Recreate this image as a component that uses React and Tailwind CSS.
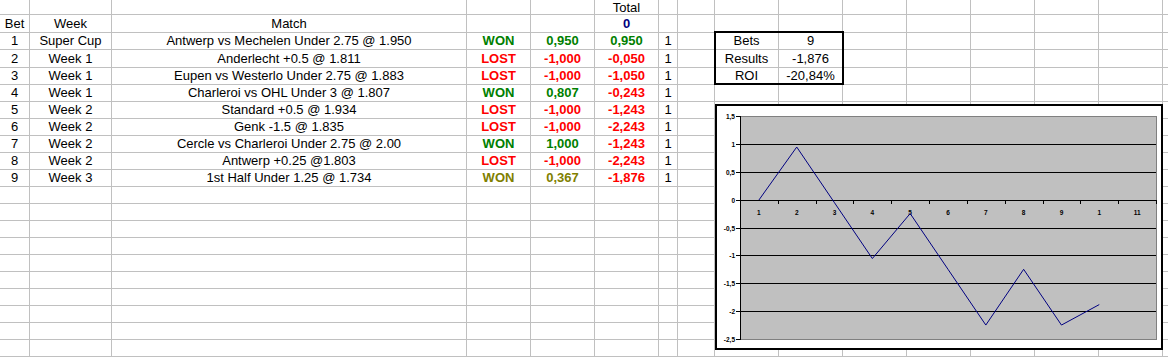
import React from "react";

const W = [
  "w-[30px]", "w-[82px]", "w-[355px]", "w-[64px]", "w-[64px]", "w-[64px]", "w-[19px]", "w-[37px]",
  "w-[64px]", "w-[64px]", "w-[64px]", "w-[64px]", "w-[64px]", "w-[64px]", "w-[64px]", "w-[64px]",
];

const G = "text-[#008000] font-bold";
const R = "text-[#ff0000] font-bold";
const O = "text-[#808000] font-bold";

const bets = [
  ["1", "Super Cup", "Antwerp vs Mechelen Under 2.75 @ 1.950", ["WON", G], ["0,950", G], ["0,950", G], ["Bets", ""], ["9", ""]],
  ["2", "Week 1", "Anderlecht +0.5 @ 1.811", ["LOST", R], ["-1,000", R], ["-0,050", R], ["Results", ""], ["-1,876", ""]],
  ["3", "Week 1", "Eupen vs Westerlo Under 2.75 @ 1.883", ["LOST", R], ["-1,000", R], ["-1,050", R], ["ROI", ""], ["-20,84%", ""]],
  ["4", "Week 1", "Charleroi vs OHL Under 3 @ 1.807", ["WON", G], ["0,807", G], ["-0,243", R]],
  ["5", "Week 2", "Standard +0.5 @ 1.934", ["LOST", R], ["-1,000", R], ["-1,243", R]],
  ["6", "Week 2", "Genk -1.5 @ 1.835", ["LOST", R], ["-1,000", R], ["-2,243", R]],
  ["7", "Week 2", "Cercle vs Charleroi Under 2.75 @ 2.00", ["WON", G], ["1,000", G], ["-1,243", R]],
  ["8", "Week 2", "Antwerp +0.25 @1.803", ["LOST", R], ["-1,000", R], ["-2,243", R]],
  ["9", "Week 3", "1st Half Under 1.25 @ 1.734", ["WON", O], ["0,367", O], ["-1,876", R]],
];

function Row({ h, cells, first }) {
  return (
    <div className={`flex shrink-0 ${h}`}>
      {W.map((w, i) => {
        const c = cells[i];
        return (
          <div
            key={i}
            className={`${w} shrink-0 h-full border-r border-b border-[#c0c0c0] flex items-end justify-center whitespace-nowrap ${
              first ? "pb-0 leading-[13px]" : "pb-[1px] leading-[15px]"
            } ${c ? c[1] : ""}`}
          >
            {c ? c[0] : ""}
          </div>
        );
      })}
    </div>
  );
}

const rows = [];
rows.push({ h: "h-[15px]", first: true, cells: { 5: ["Total", ""] } });
rows.push({
  h: "h-[18px]",
  cells: { 0: ["Bet", ""], 1: ["Week", ""], 2: ["Match", ""], 5: ["0", "text-[#000080] font-bold"] },
});
const hs = ["h-[17px]", "h-[18px]", "h-[17px]", "h-[17px]", "h-[17px]", "h-[17px]", "h-[17px]", "h-[17px]", "h-[17px]"];
bets.forEach((b, i) => {
  const cells = {
    0: [b[0], ""],
    1: [b[1], ""],
    2: [b[2], ""],
    3: b[3],
    4: b[4],
    5: b[5],
    6: ["1", ""],
  };
  if (b[6]) cells[8] = b[6];
  if (b[7]) cells[9] = b[7];
  rows.push({ h: hs[i], cells });
});
for (let i = 0; i < 10; i++) rows.push({ h: "h-[17px]", cells: {} });

function Chart() {
  const px0 = 25;
  const pw = 416;
  const cw = pw / 11;
  const gy = [12, 40, 68, 96, 124, 151, 179, 207, 235];
  const labels = ["1,5", "1", "0,5", "0", "-0,5", "-1", "-1,5", "-2", "-2,5"];
  const xl = ["1", "2", "3", "4", "5", "6", "7", "8", "9", "1", "11"];
  const vals = [0, 0.95, -0.05, -1.05, -0.243, -1.243, -2.243, -1.243, -2.243, -1.876];
  const pts = vals.map((v, i) => `${px0 + cw * (i + 0.5)},${96 - v * 55.75}`).join(" ");
  return (
    <div className="absolute left-[715px] top-[104px] w-[448px] h-[246px] border-2 border-black bg-white">
      <svg
        width="448"
        height="246"
        className="absolute -left-[2px] -top-[2px]"
        style={{ fontFamily: "'Liberation Sans', Arial, sans-serif" }}
      >
        <rect x={25.5} y={12.5} width={pw} height={223} fill="#c0c0c0" stroke="#808080" />
        {gy.slice(1, 8).map((y, i) => (
          <line key={i} x1={25} x2={441} y1={y + 0.5} y2={y + 0.5} stroke="#000" strokeWidth="1" />
        ))}
        <line x1={25.5} x2={25.5} y1={12} y2={236} stroke="#000" />
        {gy.map((y, i) => (
          <line key={"t" + i} x1={21} x2={25} y1={y + 0.5} y2={y + 0.5} stroke="#000" />
        ))}
        {Array.from({ length: 12 }).map((_, k) => {
          const x = Math.round(px0 + cw * k) + 0.5;
          return <line key={"x" + k} x1={x} x2={x} y1={96} y2={100} stroke="#000" />;
        })}
        {gy.map((y, i) => (
          <text key={"l" + i} x={20} y={y + 2.5} fontSize="6.5" fontWeight="bold" textAnchor="end" fill="#000">
            {labels[i]}
          </text>
        ))}
        {xl.map((t, i) => (
          <text key={"c" + i} x={px0 + cw * (i + 0.5)} y={110.5} fontSize="6.5" fontWeight="bold" textAnchor="middle" fill="#000">
            {t}
          </text>
        ))}
        <polyline points={pts} fill="none" stroke="#000080" strokeWidth="1" />
      </svg>
    </div>
  );
}

export default function App() {
  return (
    <div className="relative w-[1168px] h-[357px] overflow-hidden bg-white text-black text-[13px] font-['Liberation_Sans',Arial,sans-serif]">
      <div className="flex flex-col">
        {rows.map((r, i) => (
          <Row key={i} h={r.h} cells={r.cells} first={r.first} />
        ))}
      </div>
      <div className="absolute left-[714px] top-[31px] w-[130px] h-[54px] border-2 border-black pointer-events-none" />
      <Chart />
    </div>
  );
}
